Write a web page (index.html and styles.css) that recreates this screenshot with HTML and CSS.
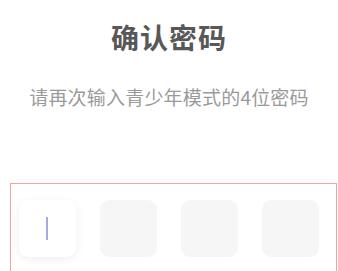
FILE: index.html
```html
<!DOCTYPE html>
<html lang="zh">
<head>
<meta charset="utf-8">
<link rel="stylesheet" href="styles.css">
</head>
<body>
<div class="page">
  <h1 class="title">确认密码</h1>
  <p class="subtitle">请再次输入青少年模式的4位密码</p>
  <div class="code-area">
    <div class="cells">
      <div class="cell active"><span class="caret"></span></div>
      <div class="cell"></div>
      <div class="cell"></div>
      <div class="cell"></div>
    </div>
  </div>
</div>
</body>
</html>
```
FILE: styles.css
```css
html, body {
  margin: 0;
  padding: 0;
  background: #ffffff;
}
.page {
  width: 338px;
  height: 271px;
  overflow: hidden;
  font-family: "Noto Sans CJK SC", "Noto Sans", sans-serif;
}
.title {
  margin: 20px 0 0;
  font-size: 28px;
  line-height: 34px;
  font-weight: 700;
  color: #585858;
  text-align: center;
  letter-spacing: 1px;
}
.subtitle {
  margin: 32px 0 0;
  font-size: 19px;
  line-height: 22px;
  color: #9a9a9a;
  text-align: center;
  letter-spacing: 0.2px;
}
.code-area {
  margin: 75px 1px 0 10px;
  height: 120px;
  border: 1.5px solid #eea69d;
  border-bottom: none;
  box-sizing: border-box;
  padding: 15.5px 0 0 7.5px;
}
.cells {
  display: flex;
  gap: 24px;
}
.cell {
  width: 57px;
  height: 57px;
  border-radius: 9px;
  background: #f6f6f6;
  display: flex;
  align-items: center;
  justify-content: center;
}
.cell.active {
  background: #ffffff;
  box-shadow: 0 2px 10px rgba(0, 0, 0, 0.07);
}
.caret {
  width: 1.5px;
  height: 23px;
  background: #a3abe3;
}
```
